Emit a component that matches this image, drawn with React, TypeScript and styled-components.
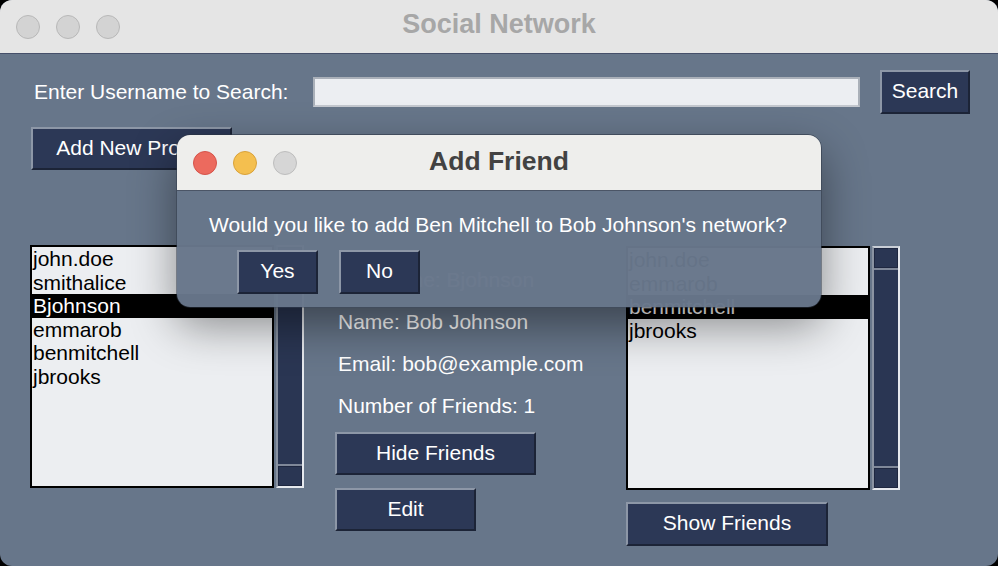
import React from "react";
import styled, { createGlobalStyle } from "styled-components";

const Global = createGlobalStyle`
  html, body { margin: 0; padding: 0; background: #000; }
  body { width: 998px; height: 566px; overflow: hidden; font-family: "Liberation Sans", Arial, sans-serif; }
  * { box-sizing: border-box; }
`;

const Window = styled.div`
  position: relative;
  width: 998px;
  height: 566px;
  border-radius: 12px;
  overflow: hidden;
  background: #67768a;
  display: flex;
  flex-direction: column;
`;

const TitleBar = styled.div<{ $light?: boolean }>`
  height: ${(p) => (p.$light ? "56px" : "54px")};
  flex: none;
  display: grid;
  grid-template-columns: 1fr auto 1fr;
  align-items: center;
  padding-left: 16px;
  background: ${(p) => (p.$light ? "#eeeeec" : "#e5e5e5")};
  border-bottom: 1px solid ${(p) => (p.$light ? "#4b5566" : "#46506a")};
`;

const Lights = styled.div`
  display: flex;
  gap: 16px;
`;

const Light = styled.span<{ $c: string; $b: string }>`
  width: 24px;
  height: 24px;
  border-radius: 50%;
  background: ${(p) => p.$c};
  border: 1px solid ${(p) => p.$b};
`;

const Title = styled.div<{ $dark?: boolean }>`
  font-weight: bold;
  font-size: ${(p) => (p.$dark ? "26.5px" : "27px")};
  color: ${(p) => (p.$dark ? "#424242" : "#a7a7a7")};
  margin-top: ${(p) => (p.$dark ? "-2px" : "-5px")};
  padding-right: 16px;
`;

const Body = styled.div`
  flex: 1;
  display: flex;
  flex-direction: column;
  padding: 16px 28px 0 30px;
  color: #fff;
  font-size: 21px;
`;

const SearchRow = styled.div`
  display: flex;
  align-items: center;
  height: 44px;
`;

const Label = styled.span`
  width: 283px;
  padding-left: 4px;
  color: #fff;
  font-size: 21px;
`;

const Input = styled.div`
  width: 547px;
  height: 30px;
  margin-top: -1px;
  background: #eceef2;
  border: 2px solid #aab0b9;
  border-bottom-color: #c3c7ce;
  margin-right: 20px;
`;

const Button = styled.div<{ $w: number; $h?: number }>`
  width: ${(p) => p.$w}px;
  height: ${(p) => p.$h ?? 44}px;
  flex: none;
  display: flex;
  align-items: center;
  justify-content: center;
  background: #2c3856;
  color: #fff;
  font-size: 21px;
  border-top: 2px solid #8d97a7;
  border-left: 2px solid #8d97a7;
  border-right: 2px solid #1c2437;
  border-bottom: 2px solid #1c2437;
  padding-bottom: 2px;
`;

const AddRow = styled.div`
  margin-top: 13px;
  margin-left: 1px;
`;

const Columns = styled.div`
  display: flex;
  align-items: flex-start;
  margin-top: 75px;
`;

const ListGroup = styled.div`
  display: flex;
  gap: 2px;
`;

const ListBox = styled.div<{ $h: number }>`
  width: 244px;
  height: ${(p) => p.$h}px;
  border: 2px solid #000;
  background: #eceef1;
  color: #000;
  font-size: 21px;
  line-height: 23.5px;
`;

const Item = styled.div<{ $sel?: boolean }>`
  padding-left: 1px;
  height: 23.5px;
  white-space: nowrap;
  background: ${(p) => (p.$sel ? "#000" : "transparent")};
  color: ${(p) => (p.$sel ? "#fff" : "#000")};
`;

const Scroll = styled.div<{ $h: number }>`
  width: 28px;
  height: ${(p) => p.$h}px;
  display: flex;
  flex-direction: column;
  border-left: 2px solid #8a93a2;
  border-top: 2px solid #c9ced6;
  border-right: 2px solid #e6e9ee;
  border-bottom: 2px solid #e6e9ee;
  background: #2a3653;
`;

const ScrollEnd = styled.div`
  height: 20px;
  flex: none;
  background: #2a3653;
  border: 1px solid #1e2740;
`;

const ScrollTrack = styled.div`
  flex: 1;
  background: #2a3653;
  border-top: 2px solid #7f8899;
  border-bottom: 2px solid #7f8899;
`;

const Middle = styled.div`
  width: 291px;
  margin-left: 31px;
  padding-top: 23px;
  display: flex;
  flex-direction: column;
`;

const InfoText = styled.div`
  padding-left: 3px;
  height: 24px;
  line-height: 24px;
  margin-bottom: 18px;
  color: #fff;
  white-space: nowrap;
`;

const MidButtons = styled.div`
  display: flex;
  flex-direction: column;
  gap: 13px;
  margin-top: -4px;
`;

const Right = styled.div`
  display: flex;
  flex-direction: column;
  gap: 12px;
  margin-top: 1px;
`;

const Overlay = styled.div`
  position: absolute;
  left: 176px;
  top: 134px;
  width: 646px;
  height: 174px;
  border-radius: 14px;
  overflow: hidden;
  border: 1px solid rgba(40, 48, 62, 0.6);
  box-shadow: 0 18px 45px rgba(0, 0, 0, 0.42);
  display: flex;
  flex-direction: column;
`;

const DialogBody = styled.div`
  flex: 1;
  background: rgba(103, 118, 138, 0.975);
  display: flex;
  flex-direction: column;
  padding-top: 22px;
`;

const Message = styled.div`
  text-align: center;
  color: #fff;
  font-size: 21px;
  line-height: 24px;
  padding-right: 2px;
`;

const DialogButtons = styled.div`
  display: flex;
  gap: 21px;
  margin-top: 13px;
  padding-left: 60px;
`;

const users = ["john.doe", "smithalice", "Bjohnson", "emmarob", "benmitchell", "jbrooks"];
const friends = ["john.doe", "emmarob", "benmitchell", "jbrooks"];

export default function App() {
  return (
    <>
      <Global />
      <Window>
        <TitleBar>
          <Lights>
            <Light $c="#d3d3d3" $b="#b8b8b8" />
            <Light $c="#d3d3d3" $b="#b8b8b8" />
            <Light $c="#d3d3d3" $b="#b8b8b8" />
          </Lights>
          <Title>Social Network</Title>
          <div />
        </TitleBar>
        <Body>
          <SearchRow>
            <Label>Enter Username to Search:</Label>
            <Input />
            <Button $w={90}>Search</Button>
          </SearchRow>
          <AddRow>
            <Button $w={201} $h={43}>Add New Profile</Button>
          </AddRow>
          <Columns>
            <ListGroup>
              <ListBox $h={243}>
                {users.map((u) => (
                  <Item key={u} $sel={u === "Bjohnson"}>{u}</Item>
                ))}
              </ListBox>
              <Scroll $h={243}>
                <ScrollEnd />
                <ScrollTrack />
                <ScrollEnd />
              </Scroll>
            </ListGroup>
            <Middle>
              <InfoText>Username: Bjohnson</InfoText>
              <InfoText>Name: Bob Johnson</InfoText>
              <InfoText>Email: bob@example.com</InfoText>
              <InfoText>Number of Friends: 1</InfoText>
              <MidButtons>
                <Button $w={201} $h={43}>Hide Friends</Button>
                <Button $w={141} $h={43}>Edit</Button>
              </MidButtons>
            </Middle>
            <Right>
              <ListGroup>
                <ListBox $h={244}>
                  {friends.map((u) => (
                    <Item key={u} $sel={u === "benmitchell"}>{u}</Item>
                  ))}
                </ListBox>
                <Scroll $h={244}>
                  <ScrollEnd />
                  <ScrollTrack />
                  <ScrollEnd />
                </Scroll>
              </ListGroup>
              <Button $w={202}>Show Friends</Button>
            </Right>
          </Columns>
        </Body>
        <Overlay>
          <TitleBar $light>
            <Lights>
              <Light $c="#ec6a5e" $b="#d5534a" />
              <Light $c="#f4bf4f" $b="#d8a13a" />
              <Light $c="#d6d6d6" $b="#bdbdbd" />
            </Lights>
            <Title $dark>Add Friend</Title>
            <div />
          </TitleBar>
          <DialogBody>
            <Message>Would you like to add Ben Mitchell to Bob Johnson's network?</Message>
            <DialogButtons>
              <Button $w={81}>Yes</Button>
              <Button $w={81}>No</Button>
            </DialogButtons>
          </DialogBody>
        </Overlay>
      </Window>
    </>
  );
}
